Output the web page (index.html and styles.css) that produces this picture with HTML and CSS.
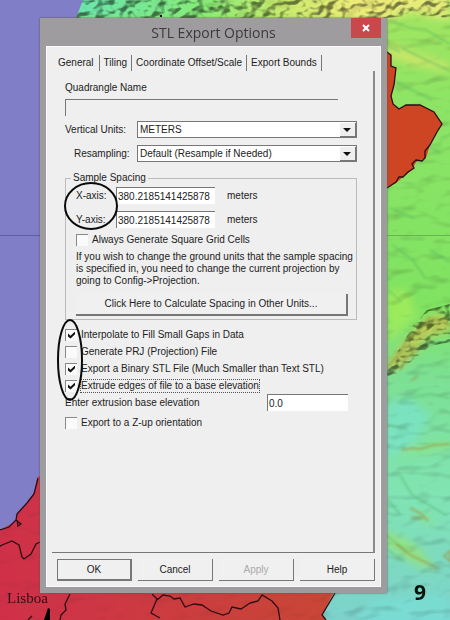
FILE: index.html
```html
<!DOCTYPE html>
<html lang="en">
<head>
<meta charset="utf-8">
<meta name="viewport" content="width=device-width, initial-scale=1">
<title>STL Export Options</title>
<link rel="stylesheet" href="styles.css">
</head>
<body>
<svg class="map" viewBox="0 0 450 620" preserveAspectRatio="none" aria-hidden="true">
  <defs>
    <linearGradient id="land" x1="0" y1="0" x2="0" y2="1">
      <stop offset="0" stop-color="#a4e660"/>
      <stop offset=".18" stop-color="#8be465"/>
      <stop offset=".5" stop-color="#80e362"/>
      <stop offset=".6" stop-color="#7ce092"/>
      <stop offset=".8" stop-color="#80e4b4"/>
      <stop offset="1" stop-color="#7cd2cc"/>
    </linearGradient>
    <linearGradient id="ridge" x1="0" y1="0" x2="1" y2="0">
      <stop offset="0" stop-color="#68e4b0"/>
      <stop offset=".35" stop-color="#86ec78"/>
      <stop offset=".55" stop-color="#c6ea6c"/>
      <stop offset=".75" stop-color="#eeec78"/>
      <stop offset="1" stop-color="#e4ec78"/>
    </linearGradient>
    <linearGradient id="red" x1="0" y1="0" x2="1" y2="0">
      <stop offset="0" stop-color="#d03049"/>
      <stop offset="1" stop-color="#c84736"/>
    </linearGradient>
    <filter id="relief" x="0" y="0" width="100%" height="100%" color-interpolation-filters="sRGB">
      <feTurbulence type="fractalNoise" baseFrequency=".04 .07" numOctaves="2" seed="8"/>
      <feDiffuseLighting surfaceScale="5" lighting-color="#fff" diffuseConstant="1.25" result="light">
        <feDistantLight azimuth="235" elevation="56"/>
      </feDiffuseLighting>
      <feComposite in="light" in2="SourceGraphic" operator="in"/>
    </filter>
    <filter id="rough" x="0" y="0" width="100%" height="100%" color-interpolation-filters="sRGB">
      <feTurbulence type="fractalNoise" baseFrequency=".08 .11" numOctaves="2" seed="4"/>
      <feDiffuseLighting surfaceScale="11" lighting-color="#fff" diffuseConstant="1.3" result="light">
        <feDistantLight azimuth="235" elevation="55"/>
      </feDiffuseLighting>
      <feComposite in="light" in2="SourceGraphic" operator="in"/>
    </filter>
    <filter id="soft"><feGaussianBlur stdDeviation="4"/></filter>
    <filter id="faint"><feGaussianBlur stdDeviation="1"/></filter>
  </defs>
  <rect width="450" height="620" fill="url(#land)"/>
  <path fill="url(#ridge)" filter="url(#soft)" d="M70-10H450V20L410 12 385 20H75Z"/>
  <g filter="url(#soft)">
    <path fill="#d8e66c" opacity=".8" d="M388 44l30 10 32 10v8l-40-8-22-8Z"/>
    <path fill="#c3cf58" opacity=".9" d="M388 362l18-22 16-18 14-8 14 4v14l-20 4-24 26-18 12Z"/>
    <path fill="#78e4da" opacity=".55" d="M385 405l25-8 20 20-20 30-25 10ZM375 600l70-5 10 30h-100Z"/>
    <path fill="#9ae46a" opacity=".7" d="M386 530l30 15 20 25-20-5-32-20ZM402 450l50-8v5l-50 8ZM410 510l20 6 4 10Z"/>
    <path fill="#a8ee58" opacity=".7" d="M387 290h20l10 25-30 30Z"/>
  </g>
  <path class="shade" opacity=".22" filter="url(#relief)" d="M78 0H450V620H300V590H387V18H78Z"/>
  <path class="shade" opacity=".5" filter="url(#rough)" d="M80 0H450V18L420 15 385 18H76ZM387 372l14-26 12-20 14-16 23-6v38l-20 4-22 18-21 18Z"/>
  <g class="slope" filter="url(#faint)">
    <path d="M388 20l22 8 16 2 24 14M402 48l20 10 28 13M388 46l12 6M392 80l40 20M410 140l30 12M390 208l24 10M392 245l20 14 14 20M430 250l20 12M388 290l14 12M400 400l30-6 20 4M388 425l20 4M400 475l12 20 34 20M388 500l12 14M386 535l20 16M388 550l16 12"/>
  </g>
  <g class="crest" filter="url(#faint)">
    <path d="M402 450l10-2 8 1 14-4 16-1M410 508l10 5 8 8M396 544l16 12 22 10 4 3M412 518h10M388 366l10-10 8-14 14-12 8-12 14 2 8 6M400 370l6-12 12-8M412 380l6-4M444 556l6-5v10Z"/>
  </g>
  <path fill="#807ec6" d="M0 0H83L76 18H45V480L36 496 18 514 17 521 0 530Z"/>
  <path class="grid" d="M0 235.500H40"/>
  <path class="grid grid-land" d="M387 235.500H450"/>
  <path fill="url(#red)" d="M0 530L16 521 17 514 27 504 36 489 37 479 39 476H42V590H335L322 615 326 620H0Z"/>
  <path class="shade" opacity=".1" filter="url(#relief)" d="M0 535L40 480V590H330L318 620H0Z"/>
  <path fill="#cd4523" d="M385 52L391 55 391 66 396 68 394 85 391 96 393 104 399 109 406 105 420 105 434 112 442 124 437 132 430 145 426 158 416 162 412 170 403 177 396 183 385 188Z"/>
  <g class="coast">
    <path d="M0 530L9 527 16 520 17 514 27 503 34 494 36 486 38 478M16 520l5 4-3 2-1-6M0 545V547M0 546L7 543 12 541 19 545 22 557 24 559 31 554 36 544 40 542"/>
    <path d="M70 594L65 604 66 610 61 615 60 620M28 620l4-4"/>
    <path d="M152 594l5 5-6 14 9 5M157 600l6-5 7 1 4 3 6-1 5 9 9-3 8 1 9 6 12 4 6-2 3-6 9 2 9-6 8-2 4-6 10 6 6 7 2 12"/>
    <path d="M335 593L322 615 326 620"/>
    <path d="M387 52L391 55 391 66 396 68 394 85 391 96 393 104 399 109 406 105 420 105 434 112 442 124 437 132 430 145 425 151 425 158 422 161 416 160 412 164 414 168 408 172 403 177 399 177 396 182 387 188"/>
  </g>
  <path d="M160 15h2v2h-2ZM48 608l2 1v11h-6Z"/>
</svg>

<main class="screen">
  <form class="dialog">
    <header class="titlebar">
      <h1 class="title">STL Export Options</h1>
      <button class="close" type="button" aria-label="Close">
        <svg viewBox="0 0 8 8" width="8" height="8"><path d="M1 1l6 6M7 1l-6 6" stroke="#fff" stroke-width="2"/></svg>
      </button>
    </header>

    <div class="client">
      <nav class="tabs">
        <button class="tab tab-active" type="button">General</button>
        <button class="tab" type="button">Tiling</button>
        <button class="tab" type="button">Coordinate Offset/Scale</button>
        <button class="tab" type="button">Export Bounds</button>
      </nav>

      <section class="panel">
        <div class="quad">
          <label for="quad">Quadrangle Name</label>
          <input class="box box-disabled" id="quad" type="text" disabled>
        </div>

        <div class="choices">
          <label for="units">Vertical Units:</label>
          <span class="combo"><select id="units"><option>METERS</option></select></span>
          <label class="inset" for="resample">Resampling:</label>
          <span class="combo"><select id="resample"><option>Default (Resample if Needed)</option></select></span>
        </div>

        <fieldset class="group">
          <legend>Sample Spacing</legend>
          <div class="axes">
            <label for="xaxis">X-axis:</label>
            <input class="box" id="xaxis" type="text" value="380.2185141425878">
            <span>meters</span>
            <label for="yaxis">Y-axis:</label>
            <input class="box" id="yaxis" type="text" value="380.2185141425878">
            <span>meters</span>
            <svg class="mark mark-axes" viewBox="0 0 54 49" aria-hidden="true"><ellipse cx="27" cy="24" rx="26" ry="23"/></svg>
          </div>
          <label class="check"><input type="checkbox"><span>Always Generate Square Grid Cells</span></label>
          <p class="hint">If you wish to change the ground units that the sample spacing is specified in, you need to change the current projection by going to Config-&gt;Projection.</p>
          <button class="btn btn-wide" type="button">Click Here to Calculate Spacing in Other Units...</button>
        </fieldset>

        <div class="options">
          <label class="check"><input type="checkbox" checked><span>Interpolate to Fill Small Gaps in Data</span></label>
          <label class="check"><input type="checkbox"><span>Generate PRJ (Projection) File</span></label>
          <label class="check"><input type="checkbox" checked><span>Export a Binary STL File (Much Smaller than Text STL)</span></label>
          <label class="check"><input type="checkbox" checked><span class="focused">Extrude edges of file to a base elevation</span></label>
          <svg class="mark mark-options" viewBox="0 0 26 82" aria-hidden="true"><ellipse cx="13" cy="41" rx="12" ry="40"/></svg>
        </div>

        <div class="base">
          <label for="base">Enter extrusion base elevation</label>
          <input class="box" id="base" type="text" value="0.0">
        </div>
        <label class="check"><input type="checkbox"><span>Export to a Z-up orientation</span></label>
      </section>

      <footer class="actions">
        <button class="btn btn-default" type="button">OK</button>
        <button class="btn" type="button">Cancel</button>
        <button class="btn" type="button" disabled>Apply</button>
        <button class="btn" type="button">Help</button>
      </footer>
    </div>
  </form>
  <span class="city">Lisboa</span>
  <span class="step">9</span>
</main>
</body>
</html>
```
FILE: styles.css
```css
* {
  box-sizing: border-box;
}

body {
  margin: 0;
  font: 10px/12px "Liberation Sans", Arial, sans-serif;
  color: #222;
}

button,
input,
select {
  margin: 0;
  padding: 0;
  border: 0;
  border-radius: 0;
  font: inherit;
  color: inherit;
  background: none;
  appearance: none;
}

/* Map behind the dialog */
.map {
  position: absolute;
  inset: 0;
  width: 100%;
  height: 100%;
}

.shade {
  mix-blend-mode: multiply;
}

.grid {
  stroke: #5a5ea4;
  stroke-width: 1;
}

.grid-land {
  stroke: #67b552;
}

.coast {
  fill: none;
  stroke: #2c0c12;
  stroke-width: 1.3;
}

.slope {
  fill: none;
  stroke: #4fae62;
  stroke-width: 1.5;
  opacity: .5;
}

.crest {
  fill: none;
  stroke: #a08a38;
  stroke-width: 2;
  opacity: .55;
}

.screen {
  position: relative;
  display: flex;
  min-height: 100vh;
  padding: 18px 63px 27px 40px;
}

.city {
  position: absolute;
  left: 7px;
  bottom: 14px;
  font: 15px/16px "Liberation Serif", serif;
  color: #300c14;
}

.step {
  position: absolute;
  right: 24px;
  bottom: 16px;
  font: bold 21px/24px "Open Sans", sans-serif;
  color: #061208;
}

/* Dialog frame */
.dialog {
  display: flex;
  flex: 1;
  flex-direction: column;
  min-width: 0;
  padding: 0 6px 6px;
  background: #9e9c9f;
  box-shadow: 0 0 2px #555;
}

.titlebar {
  display: flex;
  align-items: flex-start;
  height: 28px;
}

.title {
  flex: 1;
  margin: 0;
  padding-left: 30px;
  font: 14px/30px "Open Sans", sans-serif;
  text-align: center;
  color: #3c3a3c;
}

.close {
  display: grid;
  place-items: center;
  width: 30px;
  height: 20px;
  background: #c9484b;
}

.client {
  display: flex;
  flex: 1;
  flex-direction: column;
  padding: 8px 5px 5px;
  border: 1px solid #fafafa;
  background: #efefef;
}

/* Tabs */
.tabs {
  display: flex;
  height: 16px;
}

.tab {
  padding: 0 4px;
  border-right: 1px solid #777;
  line-height: 16px;
}

.tab-active {
  padding: 0 5px 2px 6px;
}

.panel {
  flex: 1;
  padding: 11px 16px 0 13px;
  border-right: 2px solid #8c8c8c;
  border-bottom: 1px solid #777;
}

/* Fields */
.box {
  min-width: 0;
  height: 17px;
  padding-left: 1px;
  border: solid #777;
  border-width: 1px 0 0 1px;
  background: #fff;
}

.box-disabled {
  width: 100%;
  background: #efefef;
}

.quad {
  display: grid;
  gap: 5px;
  padding-right: 19px;
}

.choices {
  display: grid;
  grid-template-columns: 72px 1fr;
  row-gap: 7px;
  align-items: center;
  margin-top: 5px;
}

.inset {
  padding-left: 9px;
}

.combo {
  position: relative;
  display: flex;
  height: 17px;
  border: 1px solid #777;
  background: #fff;
}

.combo select {
  flex: 1;
  padding-left: 2px;
}

.combo::before {
  content: "";
  position: absolute;
  top: 1px;
  right: 0;
  bottom: 0;
  width: 15px;
  border: solid #777;
  border-width: 0 1px 1px 0;
  background: #efefef;
  pointer-events: none;
}

.combo::after {
  content: "";
  position: absolute;
  top: 6px;
  right: 5px;
  border: solid transparent;
  border-width: 4px 4px 0;
  border-top-color: #111;
  pointer-events: none;
}

/* Sample spacing */
.group {
  min-width: 0;
  margin: 10px 0 0;
  padding: 3px 8px 3px 10px;
  border: 1px solid #bbb;
}

.group legend {
  margin-left: -5px;
  padding: 0 2px;
}

.axes {
  position: relative;
  display: grid;
  grid-template-columns: 40px 99px 1fr;
  row-gap: 7px;
  align-items: center;
}

.axes span {
  padding-left: 12px;
}

.mark {
  position: absolute;
  fill: none;
  stroke: #0a0a0a;
  stroke-width: 2;
  pointer-events: none;
}

.mark-axes {
  top: -5px;
  left: -12px;
  width: 54px;
  height: 49px;
}

.mark-options {
  top: -7px;
  left: -8px;
  width: 26px;
  height: 82px;
}

.check {
  display: flex;
  align-items: center;
  gap: 4px;
  height: 17px;
}

.check input {
  display: grid;
  place-items: center;
  width: 12px;
  height: 12px;
  border: solid #888;
  border-width: 1px 0 0 1px;
  background: #fafafa;
}

.check input:checked::before {
  content: "";
  width: 7px;
  height: 7px;
  background: #111;
  clip-path: polygon(0 28%, 36% 60%, 100% 0, 100% 40%, 36% 100%, 0 70%);
}

.group .check {
  margin-top: 3px;
}

.hint {
  margin: 3px -8px 7px 0;
}

.btn {
  height: 22px;
  border: solid #777;
  border-width: 0 1px 1px 0;
  background: #f0f0f0;
}

.btn:disabled {
  color: #aaa;
}

.btn-default {
  border-width: 1px 2px 2px 1px;
}

.btn-wide {
  width: 100%;
  border-width: 0 2px 2px 0;
}

.options {
  position: relative;
  margin-top: 6px;
}

.focused {
  outline: 1px dotted #555;
}

.base {
  display: flex;
  align-items: center;
  justify-content: space-between;
  margin-bottom: 3px;
  padding-right: 9px;
}

.base .box {
  width: 81px;
}

.actions {
  display: grid;
  grid-template-columns: repeat(4, 1fr);
  gap: 6px;
  padding: 6px 0 0 5px;
}
```
